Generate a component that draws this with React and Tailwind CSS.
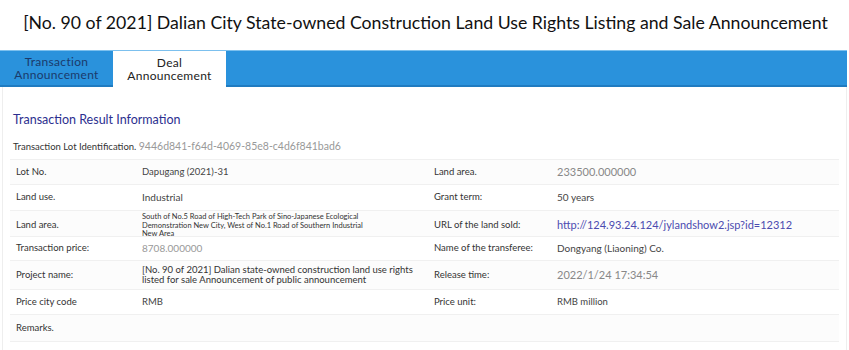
import React from "react";

const rows = [
  {
    h: "h-[25px]",
    l1: "Lot No.",
    v1: "Dapugang (2021)-31",
    v1c: "text-[#444] text-[9.5px]",
    l2: "Land area.",
    v2: "233500.000000",
    v2c: "text-[#888] text-[11px]",
  },
  {
    h: "h-[26px]",
    l1: "Land use.",
    v1: "Industrial",
    v1c: "text-[#444] text-[10px]",
    l2: "Grant term:",
    v2: "50 years",
    v2c: "text-[#444] text-[10px]",
  },
  {
    h: "h-[26px]",
    l1: "Land area.",
    v1: "South of No.5 Road of High-Tech Park of Sino-Japanese Ecological Demonstration New City, West of No.1 Road of Southern Industrial New Area",
    v1c: "text-[#333] text-[7.5px] leading-[8.5px] pr-[60px] pt-[2px]",
    l2: "URL of the land sold:",
    v2: "http://124.93.24.124/jylandshow2.jsp?id=12312",
    v2c: "text-[#4b4bb0] text-[11px]",
  },
  {
    h: "h-[24px]",
    l1: "Transaction price:",
    v1: "8708.000000",
    v1c: "text-[#999] text-[10px]",
    l2: "Name of the transferee:",
    v2: "Dongyang (Liaoning) Co.",
    v2c: "text-[#444] text-[10px]",
  },
  {
    h: "h-[29px]",
    l1: "Project name:",
    v1: "[No. 90 of 2021] Dalian state-owned construction land use rights listed for sale Announcement of public announcement",
    v1c: "text-[#333] text-[9.5px] leading-[10px]",
    l2: "Release time:",
    v2: "2022/1/24 17:34:54",
    v2c: "text-[#888] text-[11px]",
  },
  {
    h: "h-[25px]",
    l1: "Price city code",
    v1: "RMB",
    v1c: "text-[#444] text-[9.5px]",
    l2: "Price unit:",
    v2: "RMB million",
    v2c: "text-[#444] text-[9.5px]",
  },
  {
    h: "h-[27px]",
    l1: "Remarks.",
    v1: "",
    v1c: "",
    l2: "",
    v2: "",
    v2c: "",
  },
];

export default function App() {
  return (
    <div
      className="w-[849px] h-[350px] bg-white overflow-hidden"
      style={{ fontFamily: "Lato, 'Noto Sans', sans-serif" }}
    >
      <h1 className="h-[50px] flex items-center justify-center whitespace-nowrap text-[17.7px] text-[#111] pl-[2px] pb-[3px]">
        [No. 90 of 2021] Dalian City State-owned Construction Land Use Rights Listing and Sale Announcement
      </h1>
      <div className="mr-[2px] h-[37px] bg-[#2a92dc] border-t border-[#7cc0ee] border-b-2 border-b-[#1f7bc0] flex">
        <div className="w-[113px] flex flex-col items-center justify-center text-[12px] tracking-[0.3px] leading-[13px] text-[#1b3a6b]">
          <span>Transaction</span>
          <span>Announcement</span>
        </div>
        <div className="w-[113px] bg-white flex flex-col items-center justify-center text-[12px] tracking-[0.3px] leading-[13px] text-[#222] -mb-[2px]">
          <span>Deal</span>
          <span>Announcement</span>
        </div>
      </div>
      <div className="mx-[2px] border-x border-[#eeeeee] h-full px-[7px]">
        <div className="pt-[25px] pl-[3px] text-[12.5px] text-[#2c2f8f] leading-[16px]">
          Transaction Result Information
        </div>
        <div className="pt-[11px] pl-[3px] h-[31px] text-[9.5px] leading-[14px] text-[#333]">
          Transaction Lot Identification.{" "}
          <span className="text-[#999] text-[10.5px]">9446d841-f64d-4069-85e8-c4d6f841bad6</span>
        </div>
        <div className="border-t border-[#f0f0f0]">
          {rows.map((r, i) => (
            <div
              key={i}
              className={`grid grid-cols-[127px_290px_125px_1fr] border-b border-[#f0f0f0] ${r.h} ${
                i % 2 === 0 ? "bg-[#fcfcfc]" : "bg-white"
              }`}
            >
              <div className="flex items-center pl-[6px] text-[9.5px] text-[#333]">{r.l1}</div>
              <div className={`flex items-center pl-[5px] ${r.v1c}`}>{r.v1}</div>
              <div className="flex items-center pl-[7px] text-[9.5px] text-[#333]">{r.l2}</div>
              <div className={`flex items-center pl-[5px] ${r.v2c}`}>{r.v2}</div>
            </div>
          ))}
        </div>
      </div>
    </div>
  );
}
